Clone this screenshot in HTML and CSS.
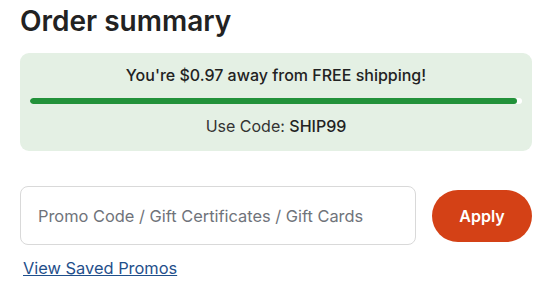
FILE: index.html
```html
<!DOCTYPE html>
<html lang="en">
<head>
<meta charset="utf-8">
<link rel="stylesheet" href="styles.css">
</head>
<body>
<div class="summary">
  <h2 class="title">Order summary</h2>
  <div class="shipping">
    <p class="ship-msg">You're $0.97 away from FREE shipping!</p>
    <div class="bar"><div class="bar-fill" style="width: 98.9%"></div></div>
    <p class="ship-code">Use Code: <strong>SHIP99</strong></p>
  </div>
  <form class="promo">
    <input class="promo-input" type="text" placeholder="Promo Code / Gift Certificates / Gift Cards">
    <button class="apply" type="button">Apply</button>
  </form>
  <a class="saved" href="#">View Saved Promos</a>
</div>
</body>
</html>
```
FILE: styles.css
```css
* { box-sizing: border-box; }
html, body { margin: 0; padding: 0; background: #fff; }
body { font-family: Inter, "Noto Sans", sans-serif; color: #222; }
.summary { padding: 4px 12px 0 20px; display: flex; flex-direction: column; }
.title { margin: 0; font-size: 28px; font-weight: 600; line-height: 34px; color: #222; }
.shipping {
  margin-top: 15px;
  background: #e4f0e4;
  border-radius: 9px;
  padding: 12px 10px 15px 10px;
  display: flex; flex-direction: column; align-items: center;
}
.ship-msg { margin: 0; font-size: 16px; font-weight: 500; line-height: 20px; color: #222; }
.bar { width: 100%; height: 6px; margin-top: 13px; background: #fff; border-radius: 3px; overflow: hidden; }
.bar-fill { height: 100%; background: #22923a; border-radius: 3px; }
.ship-code { margin: 12px 0 0; font-size: 16px; font-weight: 400; line-height: 20px; color: #333; }
.ship-code strong { font-weight: 500; color: #222; }
.promo { margin: 35px 0 0; display: flex; align-items: center; gap: 16px; }
.promo-input {
  width: 396px; height: 59px;
  border: 1px solid #d9d9d9; border-radius: 8px;
  padding: 0 17px; font-family: inherit; font-size: 16.4px; color: #222;
}
.promo-input::placeholder { color: #6f737a; }
.apply {
  width: 100px; height: 52px; border: 0; border-radius: 26px;
  background: #d44116; color: #fff; font-family: inherit; font-size: 16px; font-weight: 600;
}
.saved { margin-top: 12px; align-self: flex-start; margin-left: 3px; font-size: 16.4px; color: #1f4f8b; line-height: 22px; }
```
